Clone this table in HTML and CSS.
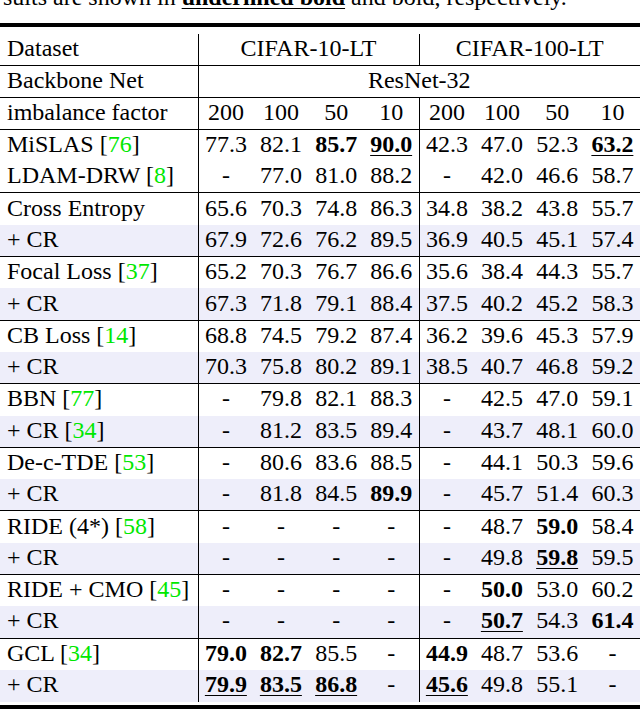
FILE: index.html
```html
<!DOCTYPE html>
<html lang="en">
<head>
    <meta charset="UTF-8">
    <meta name="viewport" content="width=device-width, initial-scale=1.0">
    <title>CIFAR-LT results</title>
    <link rel="stylesheet" href="styles.css">
</head>
<body>
    <main class="sheet">
        <p class="caption">sults are shown in <b class="best">underlined bold</b> and bold, respectively.</p>
        <div class="booktab">
            <table class="results">
                <colgroup>
                    <col class="name-col">
                    <col span="8">
                </colgroup>
                <tr class="rule">
                    <td class="name">Dataset</td>
                    <td colspan="4" class="split">CIFAR-10-LT</td>
                    <td colspan="4" class="split">CIFAR-100-LT</td>
                </tr>
                <tr class="rule">
                    <td class="name">Backbone Net</td>
                    <td colspan="8" class="split">ResNet-32</td>
                </tr>
                <tr class="rule">
                    <td class="name">imbalance factor</td>
                    <td class="split">200</td><td>100</td><td>50</td><td>10</td>
                    <td class="split">200</td><td>100</td><td>50</td><td>10</td>
                </tr>

                <tr>
                    <td class="name">MiSLAS [<span class="cite">76</span>]</td>
                    <td class="split">77.3</td><td>82.1</td><td><b>85.7</b></td><td><b class="best">90.0</b></td>
                    <td class="split">42.3</td><td>47.0</td><td>52.3</td><td><b class="best">63.2</b></td>
                </tr>
                <tr class="rule">
                    <td class="name">LDAM-DRW [<span class="cite">8</span>]</td>
                    <td class="split">-</td><td>77.0</td><td>81.0</td><td>88.2</td>
                    <td class="split">-</td><td>42.0</td><td>46.6</td><td>58.7</td>
                </tr>

                <tr>
                    <td class="name">Cross Entropy</td>
                    <td class="split">65.6</td><td>70.3</td><td>74.8</td><td>86.3</td>
                    <td class="split">34.8</td><td>38.2</td><td>43.8</td><td>55.7</td>
                </tr>
                <tr class="rule cr">
                    <td class="name">+ CR</td>
                    <td class="split">67.9</td><td>72.6</td><td>76.2</td><td>89.5</td>
                    <td class="split">36.9</td><td>40.5</td><td>45.1</td><td>57.4</td>
                </tr>

                <tr>
                    <td class="name">Focal Loss [<span class="cite">37</span>]</td>
                    <td class="split">65.2</td><td>70.3</td><td>76.7</td><td>86.6</td>
                    <td class="split">35.6</td><td>38.4</td><td>44.3</td><td>55.7</td>
                </tr>
                <tr class="rule cr">
                    <td class="name">+ CR</td>
                    <td class="split">67.3</td><td>71.8</td><td>79.1</td><td>88.4</td>
                    <td class="split">37.5</td><td>40.2</td><td>45.2</td><td>58.3</td>
                </tr>

                <tr>
                    <td class="name">CB Loss [<span class="cite">14</span>]</td>
                    <td class="split">68.8</td><td>74.5</td><td>79.2</td><td>87.4</td>
                    <td class="split">36.2</td><td>39.6</td><td>45.3</td><td>57.9</td>
                </tr>
                <tr class="rule cr">
                    <td class="name">+ CR</td>
                    <td class="split">70.3</td><td>75.8</td><td>80.2</td><td>89.1</td>
                    <td class="split">38.5</td><td>40.7</td><td>46.8</td><td>59.2</td>
                </tr>

                <tr>
                    <td class="name">BBN [<span class="cite">77</span>]</td>
                    <td class="split">-</td><td>79.8</td><td>82.1</td><td>88.3</td>
                    <td class="split">-</td><td>42.5</td><td>47.0</td><td>59.1</td>
                </tr>
                <tr class="rule cr">
                    <td class="name">+ CR [<span class="cite">34</span>]</td>
                    <td class="split">-</td><td>81.2</td><td>83.5</td><td>89.4</td>
                    <td class="split">-</td><td>43.7</td><td>48.1</td><td>60.0</td>
                </tr>

                <tr>
                    <td class="name">De-c-TDE [<span class="cite">53</span>]</td>
                    <td class="split">-</td><td>80.6</td><td>83.6</td><td>88.5</td>
                    <td class="split">-</td><td>44.1</td><td>50.3</td><td>59.6</td>
                </tr>
                <tr class="rule cr">
                    <td class="name">+ CR</td>
                    <td class="split">-</td><td>81.8</td><td>84.5</td><td><b>89.9</b></td>
                    <td class="split">-</td><td>45.7</td><td>51.4</td><td>60.3</td>
                </tr>

                <tr>
                    <td class="name">RIDE (4*) [<span class="cite">58</span>]</td>
                    <td class="split">-</td><td>-</td><td>-</td><td>-</td>
                    <td class="split">-</td><td>48.7</td><td><b>59.0</b></td><td>58.4</td>
                </tr>
                <tr class="rule cr">
                    <td class="name">+ CR</td>
                    <td class="split">-</td><td>-</td><td>-</td><td>-</td>
                    <td class="split">-</td><td>49.8</td><td><b class="best">59.8</b></td><td>59.5</td>
                </tr>

                <tr>
                    <td class="name">RIDE + CMO [<span class="cite">45</span>]</td>
                    <td class="split">-</td><td>-</td><td>-</td><td>-</td>
                    <td class="split">-</td><td><b>50.0</b></td><td>53.0</td><td>60.2</td>
                </tr>
                <tr class="rule cr">
                    <td class="name">+ CR</td>
                    <td class="split">-</td><td>-</td><td>-</td><td>-</td>
                    <td class="split">-</td><td><b class="best">50.7</b></td><td>54.3</td><td><b>61.4</b></td>
                </tr>

                <tr>
                    <td class="name">GCL [<span class="cite">34</span>]</td>
                    <td class="split"><b>79.0</b></td><td><b>82.7</b></td><td>85.5</td><td>-</td>
                    <td class="split"><b>44.9</b></td><td>48.7</td><td>53.6</td><td>-</td>
                </tr>
                <tr class="cr">
                    <td class="name">+ CR</td>
                    <td class="split"><b class="best">79.9</b></td><td><b class="best">83.5</b></td><td><b class="best">86.8</b></td><td>-</td>
                    <td class="split"><b class="best">45.6</b></td><td>49.8</td><td>55.1</td><td>-</td>
                </tr>
            </table>
        </div>
    </main>
</body>
</html>
```

FILE: styles.css
```css
body {
    margin: 0;
    background: #fff;
    color: #000;
    font-family: 'Liberation Serif', 'Times New Roman', serif;
    font-size: 24px;
    overflow: hidden;
}
.sheet {
    width: 640px;
}
.caption {
    margin: -16px 0 0;
    padding-left: 3px;
    line-height: 26px;
    white-space: nowrap;
}
.booktab {
    margin-top: 13px;
    padding: 7px 0 3px;
    border-top: 4px solid #000;
    border-bottom: 4px solid #000;
}
.results {
    width: 640px;
    table-layout: fixed;
    border-collapse: collapse;
}
.name-col {
    width: 198px;
}
.results tr {
    height: 31.8px;
}
.results td {
    padding: 0 0 3px;
    text-align: center;
    white-space: nowrap;
    line-height: 26px;
}
.results td.name {
    text-align: left;
    padding-left: 7px;
}
.results td.split {
    border-left: 1px solid #000;
}
.results tr.rule td {
    border-bottom: 1px solid #000;
}
.cr td {
    background: #eeeefa;
}
.cite {
    color: #00e800;
}
b {
    font-weight: bold;
}
.best {
    text-decoration: underline;
    text-decoration-thickness: 1px;
    text-underline-offset: 3px;
}
```
